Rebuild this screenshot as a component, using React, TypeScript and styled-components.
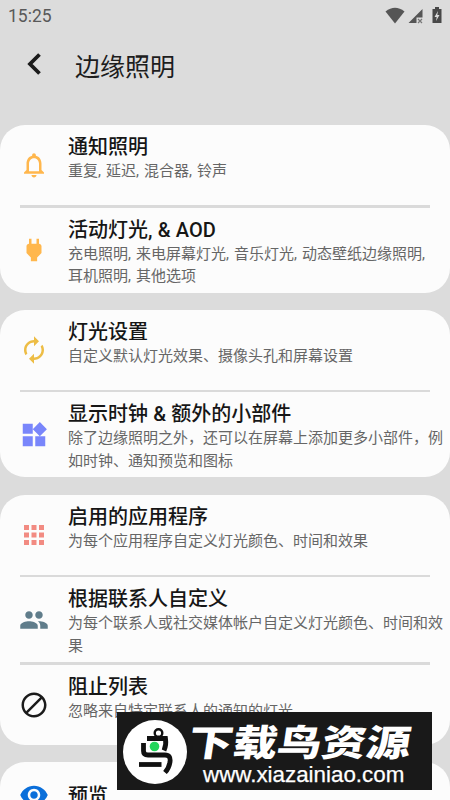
import React from 'react';
import styled, { createGlobalStyle } from 'styled-components';
import type { IconType } from 'react-icons';
import {
  MdApps,
  MdAutorenew,
  MdDoNotDisturbAlt,
  MdNotificationsNone,
  MdPeople,
  MdPower,
  MdVisibility,
  MdWidgets,
} from 'react-icons/md';

const GlobalStyle = createGlobalStyle`
  html, body {
    margin: 0;
    height: 800px;
    overflow: hidden;
    background: #dcdcdc;
  }
  body {
    font-family: Roboto, "Noto Sans CJK SC", sans-serif;
  }
`;

const Screen = styled.div`
  position: relative;
  display: flex;
  flex-direction: column;
  width: 450px;
  height: 800px;
  overflow: hidden;
  background: #dcdcdc;
`;

const StatusBar = styled.div`
  display: flex;
  align-items: center;
  justify-content: space-between;
  flex: none;
  height: 32px;
  padding: 0 8px;
  color: #595959;
  font-size: 17.5px;
`;

const StatusIcons = styled.svg`
  display: block;
  width: 58px;
  height: 20px;
`;

const Header = styled.header`
  display: flex;
  align-items: center;
  gap: 33px;
  flex: none;
  height: 68px;
  margin-bottom: 25px;
  padding-left: 26px;
`;

const BackIcon = styled.svg`
  width: 16px;
  height: 24px;
  margin-top: -4px;
`;

const PageTitle = styled.h1`
  margin: 0;
  padding-top: 3px;
  font-size: 25px;
  font-weight: 400;
  line-height: 36px;
  color: #1d1d1d;
`;

const CardList = styled.main`
  display: flex;
  flex-direction: column;
  gap: 17.3px;
`;

const Card = styled.section`
  flex: none;
  border-radius: 25px;
  background: #fcfcfc;
`;

const Row = styled.div<{ $height: number }>`
  display: grid;
  grid-template-columns: 68px 1fr;
  height: ${({ $height }) => $height}px;
`;

const IconCell = styled.div<{ $color: string }>`
  display: flex;
  align-items: center;
  justify-content: center;
  color: ${({ $color }) => $color};

  svg {
    width: 30px;
    height: 30px;
  }
`;

const RowText = styled.div<{ $centered: boolean }>`
  display: flex;
  flex-direction: column;
  justify-content: ${({ $centered }) => ($centered ? 'center' : 'flex-start')};
  padding-top: ${({ $centered }) => ($centered ? 2 : 9)}px;
`;

const RowTitle = styled.div`
  height: 26px;
  font-size: 20px;
  font-weight: 500;
  line-height: 27px;
  word-spacing: 0.3px;
  color: #161616;
`;

const RowDescription = styled.div`
  font-size: 15px;
  line-height: 22.5px;
  word-spacing: 1.3px;
  color: #666;
  white-space: pre;
`;

const Divider = styled.div`
  height: 2.5px;
  margin: 0 20px;
  background: #dadada;
`;

const Banner = styled.aside`
  position: absolute;
  left: 117px;
  top: 712px;
  display: flex;
  align-items: center;
  width: 315px;
  height: 78px;
  background: #191919;
`;

const BannerLogo = styled.svg`
  flex: none;
  width: 66px;
  height: 66px;
  margin: 2px 0 0 5px;
`;

const BannerText = styled.div`
  display: flex;
  flex-direction: column;
  padding-top: 4px;
  color: #fff;
  white-space: nowrap;
`;

const BannerName = styled.div`
  height: 44px;
  margin-left: 1px;
  font-family: "Noto Sans CJK SC", sans-serif;
  font-size: 38px;
  font-weight: 900;
  line-height: 44px;
  transform: scale(1.17, 0.96) skewX(-7deg);
  transform-origin: left center;
`;

const BannerUrl = styled.div`
  height: 24px;
  margin-left: 15px;
  font-family: "Liberation Sans", sans-serif;
  font-size: 21.5px;
  line-height: 24px;
  -webkit-text-stroke: 0.25px #fff;
  transform: scaleX(1.04);
  transform-origin: left center;
`;

interface Item {
  title: string;
  description?: string;
  icon: IconType;
  color: string;
  height: number;
}

const groups: Item[][] = [
  [
    { title: '通知照明', description: '重复, 延迟, 混合器, 铃声', icon: MdNotificationsNone, color: '#ffb74d', height: 80 },
    {
      title: '活动灯光, & AOD',
      description: '充电照明, 来电屏幕灯光, 音乐灯光, 动态壁纸边缘照明,\n耳机照明, 其他选项',
      icon: MdPower,
      color: '#ffb74d',
      height: 85,
    },
  ],
  [
    { title: '灯光设置', description: '自定义默认灯光效果、摄像头孔和屏幕设置', icon: MdAutorenew, color: '#edbd45', height: 80 },
    {
      title: '显示时钟 & 额外的小部件',
      description: '除了边缘照明之外，还可以在屏幕上添加更多小部件，例\n如时钟、通知预览和图标',
      icon: MdWidgets,
      color: '#7986fb',
      height: 85,
    },
  ],
  [
    { title: '启用的应用程序', description: '为每个应用程序自定义灯光颜色、时间和效果', icon: MdApps, color: '#f28b82', height: 80 },
    {
      title: '根据联系人自定义',
      description: '为每个联系人或社交媒体帐户自定义灯光颜色、时间和效\n果',
      icon: MdPeople,
      color: '#607d8b',
      height: 85,
    },
    { title: '阻止列表', description: '忽略来自特定联系人的通知的灯光', icon: MdDoNotDisturbAlt, color: '#1b1b1b', height: 80 },
  ],
  [{ title: '预览', icon: MdVisibility, color: '#0b6fda', height: 66 }],
];

function SettingsRow({ item }: { item: Item }) {
  const Icon = item.icon;
  return (
    <Row $height={item.height}>
      <IconCell $color={item.color}>
        <Icon />
      </IconCell>
      <RowText $centered={!item.description}>
        <RowTitle>{item.title}</RowTitle>
        {item.description && <RowDescription>{item.description}</RowDescription>}
      </RowText>
    </Row>
  );
}

export default function App() {
  return (
    <>
      <GlobalStyle />
      <Screen>
        <StatusBar>
          <span>15:25</span>
          <StatusIcons viewBox="0 0 58 20">
            <path d="M1.5 5.5Q11 -2 20.500 5.500L11 17.500Z" fill="#555" />
            <path d="M38.500 3V11.500H32.500V17H24.500Z" fill="#555" />
            <path d="M34 13L38 17M38 13L34 17" stroke="#777" strokeWidth="1.200" />
            <path d="M51 1H55V3H57.500V17H48.500V3H51Z" fill="#484848" />
            <path d="M54 5L50.500 11H52.700L52 15L55.500 9H53.300Z" fill="#dcdcdc" />
          </StatusIcons>
        </StatusBar>
        <Header>
          <BackIcon viewBox="0 0 16 24">
            <path d="M13.500 2.500L4 12L13.500 21.500" fill="none" stroke="#1b1b1b" strokeWidth="3.800" />
          </BackIcon>
          <PageTitle>边缘照明</PageTitle>
        </Header>
        <CardList>
          {groups.map((items) => (
            <Card key={items[0].title}>
              {items.map((item, index) => (
                <React.Fragment key={item.title}>
                  {index > 0 && <Divider />}
                  <SettingsRow item={item} />
                </React.Fragment>
              ))}
            </Card>
          ))}
        </CardList>
        <Banner>
          <BannerLogo viewBox="0 0 66 66">
            <circle cx="33" cy="33" r="32" fill="#fff" />
            <g fill="none" stroke="#111" strokeWidth="4.800">
              <circle cx="36.500" cy="14" r="3.800" strokeWidth="2.400" />
              <path d="M25 19.500H43.500Q44.500 26 42 31.500" />
              <path d="M21.500 24V32Q21.500 36 26 36H43Q49 36 48 43Q47 49 43 53.500" />
              <path d="M17 45.500H39.500" />
            </g>
            <circle cx="32.500" cy="27.500" r="4.800" fill="#22d65b" />
          </BannerLogo>
          <BannerText>
            <BannerName>下载鸟资源</BannerName>
            <BannerUrl>www.xiazainiao.com</BannerUrl>
          </BannerText>
        </Banner>
      </Screen>
    </>
  );
}
